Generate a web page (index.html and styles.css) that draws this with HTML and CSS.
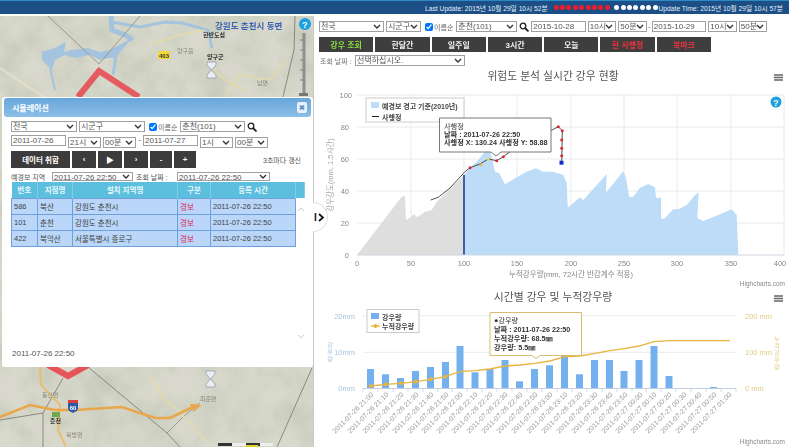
FILE: index.html
```html
<!DOCTYPE html>
<html lang="ko">
<head>
  <meta charset="UTF-8">
  <title>위험도 분석 실시간 강우 현황</title>
  <link rel="stylesheet" href="styles.css">
</head>
<body>
  <div class="top-bar">
    <span>Last Update: 2015년 10월 29일 10시 52분</span>
    <div class="dots">
      <i class="dot red"></i><i class="dot red"></i><i class="dot red"></i><i class="dot red"></i><i class="dot red"></i><i class="dot red"></i><i class="dot red"></i><i class="dot red"></i><i class="dot red"></i>
      <i class="dot"></i><i class="dot"></i><i class="dot"></i><i class="dot"></i><i class="dot"></i><i class="dot"></i><i class="dot"></i>
    </div>
    <span>Update Time: 2015년 10월 29일 10시 57분</span>
  </div>

  <div class="main">
    <!-- map side -->
    <div class="map-side">
      <svg class="map" viewBox="0 16 313 431" width="313" height="431">
        <defs>
          <filter id="terrain" x="0" y="0" width="100%" height="100%">
            <feTurbulence type="fractalNoise" baseFrequency="0.035" numOctaves="4" seed="7"/>
            <feColorMatrix type="matrix" values="0 0 0 0 0.55  0 0 0 0 0.58  0 0 0 0 0.48  1.6 0 0 0 -0.55"/>
          </filter>
          <filter id="soft"><feGaussianBlur stdDeviation="0.5"/></filter>
        </defs>
        <rect x="0" y="16" width="313" height="431" fill="#d8d9cc"/>
        <rect x="0" y="16" width="313" height="431" filter="url(#terrain)"/>
        <g filter="url(#soft)">
          <path d="M42 52 L55 48 L60 45 L66 42 L64 52 L72 50 L88 48 L100 52 L110 50 L125 42 L132 38 L122 50 L115 58 L108 58 L100 60 L90 55 L75 58 L65 55 L55 60 L52 70 L48 66 L42 60 Z" fill="#a3c3de"/>
          <polyline points="111,16 112,30 125,35 133,40" fill="none" stroke="#a3c3de" stroke-width="5"/>
          <polyline points="112,22 140,27 165,22 182,23 208,30 212,48" fill="none" stroke="#a3c3de" stroke-width="3"/>
          <polyline points="116,56 113,75" fill="none" stroke="#a3c3de" stroke-width="3"/>
          <polyline points="50,68 55,90" fill="none" stroke="#a3c3de" stroke-width="2"/>
          <polyline points="0,68 30,88 45,97" fill="none" stroke="#e4e0c8" stroke-width="2"/>
          <polyline points="150,45 180,35 205,30" fill="none" stroke="#e6d9a8" stroke-width="1.5"/>
          <polyline points="225,95 240,75 270,80 285,60" fill="none" stroke="#e6d9a8" stroke-width="1.5"/>
          <polyline points="205,62 225,80 245,90" fill="none" stroke="#e6d9a8" stroke-width="1.5"/>
          <polyline points="48,16 99,64 140,16" fill="none" stroke="#8c8c80" stroke-width="0.8"/>
          <polyline points="295,16 294,50 283,97" fill="none" stroke="#77776c" stroke-width="0.8"/>
          <polyline points="78,97 99,71 139,97" fill="none" stroke="#e8474c" stroke-width="6" opacity="0.85"/>
          <polyline points="48,365 68,376 88,365" fill="none" stroke="#e8474c" stroke-width="6" opacity="0.9"/>
          <polyline points="88,367 167,433 180,447" fill="none" stroke="#77776c" stroke-width="0.8"/>
          <polyline points="312,368 277,447" fill="none" stroke="#77776c" stroke-width="0.8"/>
          <polyline points="63,378 43,413 43,447" fill="none" stroke="#77776c" stroke-width="0.8"/>
          <polyline points="43,413 0,420" fill="none" stroke="#77776c" stroke-width="0.8"/>
          <polyline points="167,433 185,415 200,403" fill="none" stroke="#77776c" stroke-width="0.6"/>
          <polyline points="40,367 41,385 60,405 58,430 66,447" fill="none" stroke="#e9bd72" stroke-width="2"/>
          <polyline points="150,375 165,400 180,412 205,440" fill="none" stroke="#e6d9a8" stroke-width="1.5"/>
          <polyline points="0,417 30,405 55,410 75,410 122,407 155,418 170,418 197,405" fill="none" stroke="#e9a74a" stroke-width="2.5"/>
          <polyline points="190,405 199,406 193,411" fill="none" stroke="#e9a74a" stroke-width="2"/>
        </g>
        <rect x="158" y="51" width="12" height="8" rx="1" fill="#f2d83c"/>
        <text class="map-shield" x="164" y="57.5" text-anchor="middle">403</text>
        <path class="sandglass" d="M207 62h9v3l-4.500 5 4.500 5v3h-9v-3l4.500-5-4.500-5z"/>
        <path class="sandglass" d="M206 371h9v3l-4.500 5 4.500 5v3h-9v-3l4.500-5-4.500-5z"/>
        <text class="map-town blue" x="215" y="29">강원도 춘천시 동면</text>
        <text class="map-town dark" x="203" y="37">한반도섬</text>
        <text class="map-town" x="177" y="53">양구읍</text>
        <text class="map-town dark" x="207" y="59">양구군</text>
        <text class="map-town" x="257" y="85">남면</text>
        <text class="map-town" x="42" y="397">동산면</text>
        <text class="map-town" x="200" y="401">최준면</text>
        <text class="map-town dark" x="50" y="423">춘천</text>
        <text class="map-town" x="66" y="437">북방면</text>
        <path d="M68 401h10v7c0 3-3 4-5 5-2-1-5-2-5-5z" fill="#2a5aa8"/>
        <rect x="68" y="400" width="10" height="3" fill="#d84040"/>
        <text class="map-shield light" x="73" y="410" text-anchor="middle">60</text>
        <rect x="52" y="412" width="8" height="5" fill="#6ea84c"/>
        <rect x="218" y="443" width="14" height="3" fill="#333"/><rect x="232" y="443" width="14" height="3" fill="#eee"/>
        <rect x="246" y="443" width="14" height="3" fill="#333"/><rect x="260" y="443" width="13" height="3" fill="#eee"/>
        <rect x="246" y="445" width="12" height="2" fill="#e4d020"/>
        <rect x="302.500" y="33" width="3" height="62" fill="#8f8f8f"/>
        <path d="M300 40h3M300 50h3M300 60h3M300 70h3M300 80h3" stroke="#666" stroke-width="0.7"/>
        <rect x="299" y="93" width="9" height="3" fill="#777"/>
        <circle cx="305" cy="24" r="6" fill="#1d9fe0"/>
        <text class="help-mark" x="305" y="27.500" text-anchor="middle">?</text>
      </svg>

      <div class="sim-dialog">
        <div class="sim-head">
          <span>시뮬레이션</span>
          <span class="sim-close">✖</span>
        </div>
        <div class="sim-body">
          <div class="form-row">
            <select class="s66"><option>전국</option></select>
            <select class="s66"><option>시군구</option></select>
            <label class="check"><input type="checkbox" checked>이름순</label>
            <select class="s65"><option>춘천(101)</option></select>
            <svg class="search" viewBox="0 0 10 10" width="10" height="10"><circle cx="4" cy="4" r="2.800" fill="none" stroke="#222" stroke-width="1.300"/><path d="M6 6l3.500 3.500" stroke="#222" stroke-width="1.800"/></svg>
          </div>
          <div class="form-row date-row">
            <input class="date" value="2011-07-26">
            <select class="s33"><option>21시</option></select>
            <select class="s33"><option>00분</option></select>
            <span class="dash">-</span>
            <input class="date" value="2011-07-27">
            <select class="s33"><option>1시</option></select>
            <select class="s33"><option>00분</option></select>
          </div>
          <div class="form-row btn-row">
            <button class="dark-btn wide">데이터 취합</button>
            <button class="dark-btn">‹</button>
            <button class="dark-btn">▶</button>
            <button class="dark-btn">›</button>
            <button class="dark-btn small">-</button>
            <button class="dark-btn small">+</button>
            <span class="refresh">3초마다 갱신</span>
          </div>
          <div class="form-row area-row">
            <span class="area-label">예경보 지역</span>
            <select class="s81"><option>2011-07-26 22:50</option></select>
            <span class="area-label">조회 날짜 :</span>
            <select class="s93"><option>2011-07-26 22:50</option></select>
          </div>
          <table class="sim-table">
            <thead>
              <tr><th class="c1">번호</th><th class="c2">지점명</th><th class="c3">설치 지역명</th><th class="c4">구분</th><th class="c5">등록 시간</th><th class="c6"></th></tr>
            </thead>
            <tbody>
              <tr><td>586</td><td>북산</td><td>강원도 춘천시</td><td class="warn">경보</td><td>2011-07-26 22:50</td><td class="blank"></td></tr>
              <tr><td>101</td><td>춘천</td><td>강원도 춘천시</td><td class="warn">경보</td><td>2011-07-26 22:50</td><td class="blank"></td></tr>
              <tr><td>422</td><td>북악산</td><td>서울특별시 종로구</td><td class="warn">경보</td><td>2011-07-26 22:50</td><td class="blank"></td></tr>
            </tbody>
          </table>
          <svg class="scroll-up" viewBox="0 0 8 5" width="8" height="5"><path d="M1 4l3-3 3 3" fill="none" stroke="#ccc" stroke-width="1"/></svg>
          <svg class="scroll-down" viewBox="0 0 8 5" width="8" height="5"><path d="M1 1l3 3 3-3" fill="none" stroke="#ccc" stroke-width="1"/></svg>
          <div class="sim-time">2011-07-26 22:50</div>
        </div>
      </div>
    </div>

    <!-- chart side -->
    <div class="chart-side">
      <div class="side-handle"><b>I</b><svg viewBox="0 0 6 9" width="6" height="9"><path d="M1 1l4 3.500-4 3.500" fill="none" stroke="#111" stroke-width="1.800"/></svg></div>
      <div class="form-row top-form">
        <select class="s65"><option>전국</option></select>
        <select class="s35"><option>시군구</option></select>
        <label class="check"><input type="checkbox" checked>이름순</label>
        <select class="s62"><option>춘천(101)</option></select>
        <svg class="search" viewBox="0 0 10 10" width="10" height="10"><circle cx="4" cy="4" r="2.800" fill="none" stroke="#222" stroke-width="1.300"/><path d="M6 6l3.500 3.500" stroke="#222" stroke-width="1.800"/></svg>
        <input class="date" value="2015-10-28">
        <select class="s29"><option>10시</option></select>
        <select class="s29"><option>50분</option></select>
        <span class="dash">-</span>
        <input class="date" value="2015-10-29">
        <select class="s29"><option>10시</option></select>
        <select class="s29"><option>50분</option></select>
      </div>
      <div class="tabs">
        <button class="tab green">강우 조회</button>
        <button class="tab">한달간</button>
        <button class="tab">일주일</button>
        <button class="tab">3시간</button>
        <button class="tab">오늘</button>
        <button class="tab red">현 사행정</button>
        <button class="tab red">북마크</button>
      </div>
      <div class="form-row query-row">
        <span class="query-label">조회 날짜 :</span>
        <select class="s110"><option>선택하십시오.</option></select>
      </div>

      <svg class="chart first" viewBox="314 67 475 223" width="475" height="223">
        <text class="chart-title" x="553" y="80" text-anchor="middle">위험도 분석 실시간 강우 현황</text>
        <path class="burger" d="M774 75h9M774 77.500h9M774 80h9"/>
        <g class="grid">
          <path d="M357 95H784M357 127H784M357 159H784M357 191H784M357 223H784"/>
          <path d="M411 95V255M464 95V255M517 95V255M571 95V255M624 95V255M677 95V255M731 95V255M784 95V255"/>
        </g>
        <polygon fill="#dedede" points="357,255 401.700,196.700 405,196 406,220 410,217.700 414,214.300 417.300,217.300 425,211.700 431.700,210 436.700,201.700 450,189 464,175 464,255"/>
        <polygon fill="#bddcf8" points="464,175 470,168.300 476.700,161.700 485,151.700 490,150 495,171.700 499.300,173.300 505,184.300 516.700,177.300 526.700,171.700 536,168.300 543.300,171.700 553.300,171.700 563.300,175 566.700,183.300 567.700,206.700 568.300,207.300 580,197.300 583.300,200 606.700,174 606,192.700 623.300,171 626,178.300 629.300,197.300 633.300,196.700 640,187.700 648.300,184 655,187.300 656,197.700 661,197.700 661,218.300 664,219 673.300,209.300 678.300,209.300 686.700,205 695,195 698.700,192.300 697.300,218.300 703.300,221 720,214.300 731.700,209.300 736.700,215 738.300,255 464,255"/>
        <path d="M464 175V255" stroke="#16328c" stroke-width="1.500"/>
        <path d="M357 255H784" stroke="#cfd6e0" stroke-width="1"/>
        <polyline points="430.700,200 438.300,197.300 450,188 456.700,180.700 465,171.700 470,167.700 480,164 488.300,159 496.700,160.700 503.300,156.700 510,151.700 558.300,126.700 562.300,130.700 561.700,162.700" fill="none" stroke="#222" stroke-width="0.800"/>
        <g fill="#d62a3a">
          <circle cx="470" cy="167.700" r="1.500"/><circle cx="496.700" cy="160.700" r="1.500"/><circle cx="503.300" cy="156.700" r="1.500"/>
          <circle cx="558.300" cy="126.700" r="1.500"/><circle cx="562.300" cy="130.700" r="1.500"/><circle cx="561.700" cy="140" r="1.500"/>
          <circle cx="561.700" cy="148.300" r="1.500"/><circle cx="561.700" cy="155.700" r="1.500"/>
        </g>
        <circle cx="480.700" cy="164.700" r="1.500" fill="#e8b93c"/><circle cx="488.300" cy="159" r="1.500" fill="#e8d65c"/>
        <rect x="559.500" y="160.700" width="4" height="4" fill="#1430c8"/>
        <rect class="legend-box" x="366" y="98" width="98" height="24"/>
        <rect x="371" y="102" width="8" height="6" fill="#bddcf8"/>
        <text class="legend" x="382" y="109">예경보 경고 기준(2010년)</text>
        <path d="M372 116.500h7" stroke="#222" stroke-width="1"/>
        <text class="legend" x="382" y="119.500">사행정</text>
        <path d="M439.500 118h111.500v34h-50l-5 4-5-4h-51.500z" fill="#fff" stroke="#777" stroke-width="1"/>
        <text class="tip" x="444" y="128.500">사행정</text>
        <text class="tip bold" x="444" y="136.500">날짜 : 2011-07-26 22:50</text>
        <text class="tip bold" x="444" y="145">사행정 X: 130.24 사행정 Y: 58.88</text>
        <circle cx="776" cy="102" r="5.500" fill="#1d9fe0"/>
        <text class="help-mark" x="776" y="105.500" text-anchor="middle">?</text>
        <g class="tick">
          <text x="352" y="98" text-anchor="end">100</text><text x="349" y="130" text-anchor="end">80</text><text x="349" y="162" text-anchor="end">60</text>
          <text x="349" y="194" text-anchor="end">40</text><text x="349" y="226" text-anchor="end">20</text><text x="349" y="258" text-anchor="end">0</text>
          <text x="357" y="266" text-anchor="middle">0</text><text x="411" y="266" text-anchor="middle">50</text><text x="464" y="266" text-anchor="middle">100</text>
          <text x="517" y="266" text-anchor="middle">150</text><text x="571" y="266" text-anchor="middle">200</text><text x="624" y="266" text-anchor="middle">250</text>
          <text x="677" y="266" text-anchor="middle">300</text><text x="731" y="266" text-anchor="middle">350</text><text x="780" y="266" text-anchor="middle">400</text>
        </g>
        <text class="axis-name" x="571" y="277" text-anchor="middle">누적강우량(mm, 72시간 반감계수 적용)</text>
        <text class="axis-name faint" transform="translate(333 175) rotate(-90)" text-anchor="middle">강우강도(mm, 1.5시간)</text>
        <text class="credits" x="785" y="286" text-anchor="end">Highcharts.com</text>
      </svg>

      <svg class="chart" viewBox="314 290 475 157" width="475" height="157">
        <text class="chart-title" x="553" y="301" text-anchor="middle">시간별 강우 및 누적강우량</text>
        <path class="burger" d="M774 296h9M774 298.500h9M774 301h9"/>
        <path class="grid" d="M363 315.700H736M363 352.300H736"/>
        <path d="M363 388.500H736" stroke="#c4cfdc" stroke-width="1"/>
        <path d="M363 388v4M378 388v4M393 388v4M408 388v4M423 388v4M438 388v4M452 388v4M467 388v4M482 388v4M497 388v4M512 388v4M527 388v4M542 388v4M557 388v4M572 388v4M587 388v4M602 388v4M617 388v4M632 388v4M646 388v4M661 388v4M676 388v4M691 388v4M706 388v4M721 388v4M736 388v4" stroke="#c4cfdc" stroke-width="0.700"/>
        <g fill="#74b0ee">
          <rect x="367" y="369" width="7" height="19"/><rect x="382" y="374.300" width="7" height="13.700"/><rect x="397" y="378" width="7" height="10"/>
          <rect x="412" y="371" width="7" height="17"/><rect x="427" y="367" width="7" height="21"/><rect x="442" y="362" width="7" height="26"/>
          <rect x="456.500" y="346" width="7" height="42"/><rect x="471.500" y="372.300" width="7" height="15.700"/><rect x="486.500" y="369" width="7" height="19"/>
          <rect x="501.500" y="360" width="7" height="28"/><rect x="516" y="381.300" width="7" height="6.700"/><rect x="531" y="369" width="7" height="19"/>
          <rect x="546" y="365.300" width="7" height="22.700"/><rect x="561" y="355.700" width="7" height="32.300"/><rect x="576" y="374.300" width="7" height="13.700"/>
          <rect x="591" y="360" width="7" height="28"/><rect x="606" y="360" width="7" height="28"/><rect x="620.500" y="371" width="7" height="17"/>
          <rect x="635.500" y="360" width="7" height="28"/><rect x="650.500" y="346" width="7" height="42"/><rect x="665.500" y="376" width="7" height="12"/>
          <rect x="710" y="387" width="7" height="1"/>
        </g>
        <polyline points="371,386 385.700,384.300 400.700,383.300 415.700,381.700 430.700,379.300 445,376.700 460,371.700 475,370.700 490,369 505,366 520,365 535,363.300 550,361 565,356.700 580,356 595,353.300 610,350.700 624.300,348.700 639,346 654,341.700 669,340.700 730,340.700" fill="none" stroke="#eab43c" stroke-width="1.300"/>
        <g fill="#eab43c">
          <circle cx="371" cy="386" r="2"/><circle cx="385.700" cy="384.300" r="2"/><circle cx="400.700" cy="383.300" r="2"/>
          <circle cx="415.700" cy="381.700" r="2"/><circle cx="430.700" cy="379.300" r="2"/><circle cx="445" cy="376.700" r="2"/>
        </g>
        <rect class="legend-box" x="367" y="309.500" width="52" height="23"/>
        <rect x="371" y="313" width="8" height="6" fill="#74b0ee"/>
        <text class="legend" x="382" y="319.500">강우량</text>
        <path d="M371 326h9" stroke="#eab43c" stroke-width="1.300"/><circle cx="375.500" cy="326" r="2" fill="#eab43c"/>
        <text class="legend" x="382" y="329">누적강우량</text>
        <path d="M490 312.500h91.500v43h-41.500l-4 3-4-3h-42z" fill="#fff" stroke="#d8bc6c" stroke-width="1"/>
        <text class="tip" x="494" y="323">●강우량</text>
        <text class="tip bold" x="494" y="332">날짜 : 2011-07-26 22:50</text>
        <text class="tip bold" x="494" y="341">누적강우량: 68.5㎜</text>
        <text class="tip bold" x="494" y="350">강우량: 5.5㎜</text>
        <g class="tick blue-tick">
          <text x="355" y="318.500" text-anchor="end">20mm</text><text x="355" y="355" text-anchor="end">10mm</text><text x="355" y="391" text-anchor="end">0mm</text>
          <text class="stack" x="330" y="347" text-anchor="middle">강</text><text class="stack" x="330" y="354" text-anchor="middle">우</text><text class="stack" x="330" y="361" text-anchor="middle">량</text>
        </g>
        <g class="tick yellow-tick">
          <text x="745" y="318.500">200 mm</text><text x="745" y="355">100 mm</text><text x="745" y="391">0 mm</text>
          <text class="stack" x="777" y="341" text-anchor="middle">누</text><text class="stack" x="777" y="348" text-anchor="middle">적</text><text class="stack" x="777" y="355" text-anchor="middle">강</text><text class="stack" x="777" y="362" text-anchor="middle">우</text><text class="stack" x="777" y="369" text-anchor="middle">량</text>
        </g>
        <g class="cat">
          <text transform="translate(374 395) rotate(-45)">2011-07-26 21:00</text>
          <text transform="translate(389 395) rotate(-45)">2011-07-26 21:10</text>
          <text transform="translate(404 395) rotate(-45)">2011-07-26 21:20</text>
          <text transform="translate(419 395) rotate(-45)">2011-07-26 21:30</text>
          <text transform="translate(434 395) rotate(-45)">2011-07-26 21:40</text>
          <text transform="translate(449 395) rotate(-45)">2011-07-26 21:50</text>
          <text transform="translate(463 395) rotate(-45)">2011-07-26 22:00</text>
          <text transform="translate(478 395) rotate(-45)">2011-07-26 22:10</text>
          <text transform="translate(493 395) rotate(-45)">2011-07-26 22:20</text>
          <text transform="translate(508 395) rotate(-45)">2011-07-26 22:30</text>
          <text transform="translate(523 395) rotate(-45)">2011-07-26 22:40</text>
          <text transform="translate(538 395) rotate(-45)">2011-07-26 22:50</text>
          <text transform="translate(553 395) rotate(-45)">2011-07-26 23:00</text>
          <text transform="translate(568 395) rotate(-45)">2011-07-26 23:10</text>
          <text transform="translate(583 395) rotate(-45)">2011-07-26 23:20</text>
          <text transform="translate(598 395) rotate(-45)">2011-07-26 23:30</text>
          <text transform="translate(613 395) rotate(-45)">2011-07-26 23:40</text>
          <text transform="translate(628 395) rotate(-45)">2011-07-26 23:50</text>
          <text transform="translate(643 395) rotate(-45)">2011-07-27 00:00</text>
          <text transform="translate(657 395) rotate(-45)">2011-07-27 00:10</text>
          <text transform="translate(672 395) rotate(-45)">2011-07-27 00:20</text>
          <text transform="translate(687 395) rotate(-45)">2011-07-27 00:30</text>
          <text transform="translate(702 395) rotate(-45)">2011-07-27 00:40</text>
          <text transform="translate(717 395) rotate(-45)">2011-07-27 00:50</text>
          <text transform="translate(732 395) rotate(-45)">2011-07-27 01:00</text>
        </g>
        <text class="credits" x="785" y="444" text-anchor="end">Highcharts.com</text>
      </svg>
    </div>
  </div>
</body>
</html>
```

FILE: styles.css
```css
* {
  box-sizing: border-box;
}
html, body {
  margin: 0;
  padding: 0;
}
body {
  width: 789px;
  height: 447px;
  overflow: hidden;
  background: #fff;
  font-family: "Liberation Sans", "Noto Sans CJK KR", sans-serif;
  font-size: 8px;
  color: #555;
}
svg text {
  font-family: "Liberation Sans", "Noto Sans CJK KR", sans-serif;
}
select, input, button {
  font-family: "Liberation Sans", "Noto Sans CJK KR", sans-serif;
  margin: 0;
}

/* top status bar */
.top-bar {
  height: 14px;
  background: #1b4f86;
  border-top: 1px solid #2e8ac4;
  color: #e8f0f8;
  font-size: 6.700px;
  display: flex;
  align-items: center;
  justify-content: flex-end;
  padding-right: 6px;
}
.dots {
  display: flex;
  gap: 1.400px;
  margin: 0 1px 0 6px;
}
.dot {
  width: 5px;
  height: 5px;
  border-radius: 50%;
  background: #fff;
}
.dot.red {
  background: #f01c28;
}
.dot.red + .dot:not(.red) {
  margin-left: 3px;
}

.main {
  display: flex;
  margin-top: 2px;
  height: 431px;
}

/* map + floating dialog */
.map-side {
  position: relative;
  width: 313px;
  height: 431px;
  flex: none;
}
.map {
  display: block;
}
.map-town {
  font-size: 6px;
  fill: #8a8a7c;
}
.map-town.blue {
  font-size: 8.500px;
  fill: #3c62b4;
  font-weight: bold;
}
.map-town.dark {
  fill: #333;
  font-weight: bold;
}
.map-shield {
  font-size: 6px;
  font-weight: bold;
  fill: #333;
}
.map-shield.light {
  fill: #fff;
}
.sandglass {
  fill: #e8eef4;
  stroke: #8a97a8;
  stroke-width: 0.700;
}
.help-mark {
  font-size: 9px;
  font-weight: bold;
  fill: #fff;
}

.sim-dialog {
  position: absolute;
  left: 2px;
  top: 81px;
  width: 311px;
  height: 270px;
  background: #fff;
  border-radius: 3px;
  padding: 1px;
}
.sim-head {
  height: 19px;
  margin: 0 1px;
  background: linear-gradient(#68a6da, #8cbfe8);
  border-radius: 3px;
  color: #fff;
  font-size: 8px;
  font-weight: bold;
  display: flex;
  align-items: center;
  justify-content: space-between;
  padding: 0 4px 0 8px;
}
.sim-close {
  width: 10px;
  height: 11px;
  background: #e6f1fa;
  color: #5a8fc0;
  border-radius: 2px;
  font-size: 7px;
  text-align: center;
  line-height: 11px;
}
.sim-body {
  position: relative;
  padding: 4px 0 0 8px;
  height: 249px;
}

/* form rows */
.form-row {
  display: flex;
  align-items: center;
  gap: 2px;
  white-space: nowrap;
}
.form-row select, .form-row input.date {
  height: 11px;
  font-size: 8px;
  line-height: 9px;
  padding: 0 0 0 1px;
  border: 1px solid #a0a0a0;
  background-color: #fff;
  color: #555;
  border-radius: 0;
  flex: none;
  outline: 0;
}
.form-row select {
  appearance: none;
  -webkit-appearance: none;
  background-image: url("data:image/svg+xml,%3Csvg xmlns='http://www.w3.org/2000/svg' width='8' height='5'%3E%3Cpath d='M1 1l3 3 3-3' fill='none' stroke='%23333' stroke-width='1.400'/%3E%3C/svg%3E");
  background-repeat: no-repeat;
  background-position: right 2px center;
}
input.date {
  width: 55px;
}
.check {
  display: flex;
  align-items: center;
  gap: 1px;
  margin: 0 1px 0 2px;
  color: #666;
  font-size: 7px;
  flex: none;
}
.check input {
  width: 8px;
  height: 8px;
  margin: 0;
}
.search {
  flex: none;
}
.dash {
  width: 3px;
  text-align: center;
}
.s29 { width: 29px; }
.s33 { width: 33px; }
.s35 { width: 35px; }
.s62 { width: 61px; }
.s65 { width: 65px; }
.s66 { width: 66px; }
.s81 { width: 81px; }
.s93 { width: 93px; }
.s110 { width: 110px; }

.date-row {
  margin-top: 3px;
  align-items: flex-start;
  height: 13px;
}
.date-row select {
  margin-top: 2px;
}
.btn-row {
  margin-top: 3px;
  height: 17px;
}
.dark-btn {
  width: 24px;
  height: 17px;
  background: #3c3c3c;
  color: #fff;
  border: 0;
  padding: 0;
  font-size: 8px;
  font-weight: bold;
}
.dark-btn.wide {
  width: 59px;
  font-size: 7.500px;
}
.dark-btn.small {
  width: 22px;
}
.refresh {
  margin-left: 65px;
  font-size: 7px;
}
.area-row {
  margin-top: 4px;
  height: 9px;
  gap: 3px;
}
.area-row select {
  height: 9px;
}
.area-label {
  font-size: 7px;
  width: 38px;
  flex: none;
}

/* station table */
.sim-table {
  margin-top: 1px;
  width: 293px;
  table-layout: fixed;
  border-collapse: collapse;
  font-size: 7.500px;
}
.sim-table th {
  height: 16px;
  background: #5dbfde;
  color: #eaf8fc;
  font-weight: bold;
  padding: 0;
  border-right: 1px solid #7fd0e6;
}
.sim-table td {
  height: 16px;
  padding: 0 2px;
  background: #bad6f9;
  border: 1px solid #6f9fdc;
  color: #444;
  white-space: nowrap;
}
.sim-table td.warn {
  color: #e0245a;
}
.sim-table td.blank {
  background: none;
  border: 0;
}
.c1 { width: 26px; }
.c2 { width: 35px; }
.c3 { width: 105px; }
.c4 { width: 33px; }
.c5 { width: 85px; }
.c6 { width: 9px; }

.scroll-up {
  position: absolute;
  left: 294px;
  top: 90px;
}
.scroll-down {
  position: absolute;
  left: 294px;
  top: 217px;
}
.sim-time {
  position: absolute;
  left: 9px;
  top: 232px;
  font-size: 8px;
}

/* chart side */
.chart-side {
  position: relative;
  width: 476px;
  border-left: 1px solid #c8c8c8;
  padding-top: 5px;
}
.side-handle {
  position: absolute;
  left: -1px;
  top: 186px;
  width: 15px;
  height: 30px;
  border-radius: 0 15px 15px 0;
  background: #fff;
  border: 1px solid #e0e0e0;
  border-left: 0;
  display: flex;
  align-items: center;
  gap: 1px;
  padding-left: 1px;
  color: #111;
  font-size: 10px;
}
.side-handle b {
  line-height: 9px;
}
.top-form {
  padding-left: 5px;
}
.top-form .date {
  width: 54.500px;
}
.top-form .s29 {
  width: 28.500px;
}
.top-form .dash {
  margin: 0 -1px;
}
.tabs {
  display: flex;
  gap: 2px;
  margin: 5px 0 0 5px;
}
.tab {
  width: 54.300px;
  height: 15px;
  background: #3e3e3e;
  color: #f2f2f2;
  border: 0;
  padding: 0;
  font-size: 8px;
  font-weight: bold;
}
.tab.green {
  color: #86e03a;
}
.tab.red {
  color: #f0323c;
}
.query-row {
  margin: 3px 0 0 6px;
  color: #777;
  gap: 0;
}
.query-label {
  width: 35px;
  font-size: 7px;
  flex: none;
}
.chart {
  display: block;
}
.chart.first {
  margin-top: 1px;
}
.chart-title {
  font-size: 10.800px;
  fill: #555;
}
.burger {
  stroke: #666;
  stroke-width: 1.300;
  fill: none;
}
.grid {
  stroke: #e8eaee;
  stroke-width: 1;
  fill: none;
}
.legend-box {
  fill: #fff;
  stroke: #ccc;
  stroke-width: 1;
}
.legend {
  font-size: 7px;
  fill: #444;
  font-weight: bold;
}
.tip {
  font-size: 7.200px;
  fill: #333;
}
.tip.bold {
  font-weight: bold;
}
.tick text {
  font-size: 7.500px;
  fill: #888;
}
.tick text.stack {
  font-size: 6px;
}
.blue-tick text {
  fill: #a8c4e0;
}
.yellow-tick text {
  fill: #e2cc84;
}
.axis-name {
  font-size: 7.500px;
  fill: #888;
}
.axis-name.faint {
  fill: #aaa;
}
.credits {
  font-size: 6.500px;
  fill: #888;
}
.cat text {
  font-size: 7px;
  fill: #999;
  text-anchor: end;
}
```
